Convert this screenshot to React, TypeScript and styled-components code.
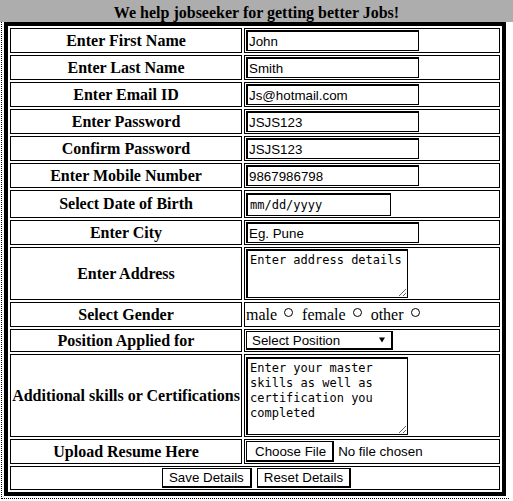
import React from "react";
import styled, { createGlobalStyle } from "styled-components";

const Global = createGlobalStyle`
  html, body {
    margin: 0;
    padding: 0;
    background: #ffffff;
  }
  body {
    width: 513px;
    height: 501px;
    overflow: hidden;
    font-family: "Liberation Serif", "Times New Roman", serif;
    color: #000;
  }
`;

const Page = styled.div`
  width: 513px;
`;

const Heading = styled.h1`
  margin: 0;
  height: 22px;
  box-sizing: border-box;
  padding-top: 4px;
  background: #adadad;
  text-align: center;
  font: bold 16px/17px "Liberation Serif", "Times New Roman", serif;
`;

const Frame = styled.div`
  box-sizing: border-box;
  width: 508px;
  margin-left: 1px;
  border-left: 1px dotted #000;
  border-bottom: 1px dotted #000;
  padding: 0 0 2px 2px;
`;

const FormTable = styled.table`
  width: 502px;
  table-layout: fixed;
  border: 4px solid #000;
  border-collapse: separate;
  border-spacing: 2px;
`;

const Row = styled.tr<{ $h: number }>`
  height: ${(p) => p.$h}px;
`;

const Label = styled.th`
  box-sizing: border-box;
  width: 232px;
  border: 1px solid #000;
  padding: 1px;
  font: bold 16px "Liberation Serif", "Times New Roman", serif;
  text-align: center;
  vertical-align: middle;
  white-space: nowrap;
`;

const Field = styled.td`
  box-sizing: border-box;
  border: 1px solid #000;
  padding: 1px;
  vertical-align: middle;
  text-align: left;
  font: 16px "Liberation Serif", "Times New Roman", serif;
`;

const TextInput = styled.input<{ $w?: number; $h?: number; $mono?: boolean }>`
  display: block;
  box-sizing: border-box;
  width: ${(p) => p.$w ?? 173}px;
  height: ${(p) => p.$h ?? 21}px;
  margin: 0;
  padding: 0 1px 0 ${(p) => (p.$mono ? 2 : 1)}px;
  border-style: solid;
  border-color: #000;
  border-width: 2px 1px 1px 2px;
  border-radius: 0;
  background: #fff;
  color: #000;
  outline: none;
  font: ${(p) =>
    p.$mono
      ? `12px "DejaVu Sans Mono", monospace`
      : `13.33px "Liberation Sans", Arial, sans-serif`};
  &::placeholder {
    color: #000;
    opacity: 1;
  }
`;

const TextArea = styled.textarea<{ $h: number }>`
  display: block;
  box-sizing: border-box;
  width: 162px;
  height: ${(p) => p.$h}px;
  margin: 0;
  padding: 2px;
  border-style: solid;
  border-color: #000;
  border-width: 2px 1px 1px 2px;
  border-radius: 0;
  background: #fff;
  color: #000;
  outline: none;
  font: 12px/15px "DejaVu Sans Mono", monospace;
  resize: both;
  &::placeholder {
    color: #000;
    opacity: 1;
  }
`;

const Options = styled.div`
  display: flex;
  align-items: baseline;
  height: 21px;
  line-height: 21px;
  gap: 4px;
`;

const Option = styled.label`
  display: inline-flex;
  align-items: baseline;
`;

const Radio = styled.input`
  appearance: none;
  box-sizing: border-box;
  width: 9px;
  height: 9px;
  margin: 0 5px 0 7px;
  border: 1px solid #000;
  border-radius: 50%;
  background: #fff;
  position: relative;
  top: -3px;
`;

const SelectWrap = styled.div`
  position: relative;
  width: 147px;
`;

const Select = styled.select`
  appearance: none;
  display: block;
  box-sizing: border-box;
  width: 147px;
  height: 19px;
  margin: 0;
  padding: 0 0 0 5px;
  border-style: solid;
  border-color: #000;
  border-width: 1px 2px 2px 1px;
  border-radius: 0;
  background: #fff;
  color: #000;
  font: 13.33px "Liberation Sans", Arial, sans-serif;
  outline: none;
`;

const Caret = styled.svg`
  position: absolute;
  left: 133px;
  top: 6px;
  pointer-events: none;
`;

const FileRow = styled.label`
  display: flex;
  align-items: center;
  gap: 4px;
  font: 13.33px "Liberation Sans", Arial, sans-serif;
`;

const HiddenFile = styled.input`
  display: none;
`;

const Button = styled.button`
  box-sizing: border-box;
  height: 20px;
  margin: 0;
  padding: 0 6px;
  border-style: solid;
  border-color: #000;
  border-width: 1px 2px 2px 1px;
  border-radius: 0;
  background: #fff;
  color: #000;
  font: 13.33px "Liberation Sans", Arial, sans-serif;
  line-height: 1;
`;

const FakeButton = styled.span`
  box-sizing: border-box;
  display: inline-flex;
  align-items: center;
  height: 21px;
  padding: 0 6px 0 8px;
  border-style: solid;
  border-color: #000;
  border-width: 1px 2px 2px 1px;
  background: #fff;
`;

const ButtonBar = styled.div`
  display: flex;
  justify-content: center;
  gap: 5px;
  padding-left: 3px;
`;

export default function App() {
  return (
    <Page>
      <Global />
      <Heading>We help jobseeker for getting better Jobs!</Heading>
      <Frame>
        <form onSubmit={(e) => e.preventDefault()}>
          <FormTable>
            <tbody>
              <Row $h={25}>
                <Label>Enter First Name</Label>
                <Field>
                  <TextInput type="text" defaultValue="John" />
                </Field>
              </Row>
              <Row $h={25}>
                <Label>Enter Last Name</Label>
                <Field>
                  <TextInput type="text" defaultValue="Smith" />
                </Field>
              </Row>
              <Row $h={25}>
                <Label>Enter Email ID</Label>
                <Field>
                  <TextInput type="email" defaultValue="Js@hotmail.com" />
                </Field>
              </Row>
              <Row $h={25}>
                <Label>Enter Password</Label>
                <Field>
                  <TextInput type="text" defaultValue="JSJS123" />
                </Field>
              </Row>
              <Row $h={25}>
                <Label>Confirm Password</Label>
                <Field>
                  <TextInput type="text" defaultValue="JSJS123" />
                </Field>
              </Row>
              <Row $h={25}>
                <Label>Enter Mobile Number</Label>
                <Field>
                  <TextInput type="text" defaultValue="9867986798" />
                </Field>
              </Row>
              <Row $h={28}>
                <Label>Select Date of Birth</Label>
                <Field>
                  <TextInput type="text" placeholder="mm/dd/yyyy" $w={145} $h={23} $mono />
                </Field>
              </Row>
              <Row $h={25}>
                <Label>Enter City</Label>
                <Field>
                  <TextInput type="text" placeholder="Eg. Pune" />
                </Field>
              </Row>
              <Row $h={53}>
                <Label>Enter Address</Label>
                <Field>
                  <TextArea $h={49} placeholder="Enter address details" />
                </Field>
              </Row>
              <Row $h={25}>
                <Label>Select Gender</Label>
                <Field>
                  <Options>
                    <Option>
                      male<Radio type="radio" name="gender" value="male" />
                    </Option>
                    <Option>
                      female<Radio type="radio" name="gender" value="female" />
                    </Option>
                    <Option>
                      other<Radio type="radio" name="gender" value="other" />
                    </Option>
                  </Options>
                </Field>
              </Row>
              <Row $h={23}>
                <Label>Position Applied for</Label>
                <Field>
                  <SelectWrap>
                    <Select defaultValue="">
                      <option value="">Select Position</option>
                      <option value="dev">Developer</option>
                      <option value="test">Tester</option>
                      <option value="manager">Manager</option>
                    </Select>
                    <Caret width="6" height="6" viewBox="0 0 6 6">
                      <path d="M0 0.5 H6 L3 5.5 Z" fill="#000" />
                    </Caret>
                  </SelectWrap>
                </Field>
              </Row>
              <Row $h={83}>
                <Label>Additional skills or Certifications</Label>
                <Field>
                  <TextArea
                    $h={78}
                    placeholder="Enter your master skills as well as certification you completed"
                  />
                </Field>
              </Row>
              <Row $h={25}>
                <Label>Upload Resume Here</Label>
                <Field>
                  <FileRow>
                    <FakeButton>Choose File</FakeButton>
                    <span>No file chosen</span>
                    <HiddenFile type="file" />
                  </FileRow>
                </Field>
              </Row>
              <Row $h={24}>
                <Field colSpan={2}>
                  <ButtonBar>
                    <Button type="submit">Save Details</Button>
                    <Button type="reset">Reset Details</Button>
                  </ButtonBar>
                </Field>
              </Row>
            </tbody>
          </FormTable>
        </form>
      </Frame>
    </Page>
  );
}
